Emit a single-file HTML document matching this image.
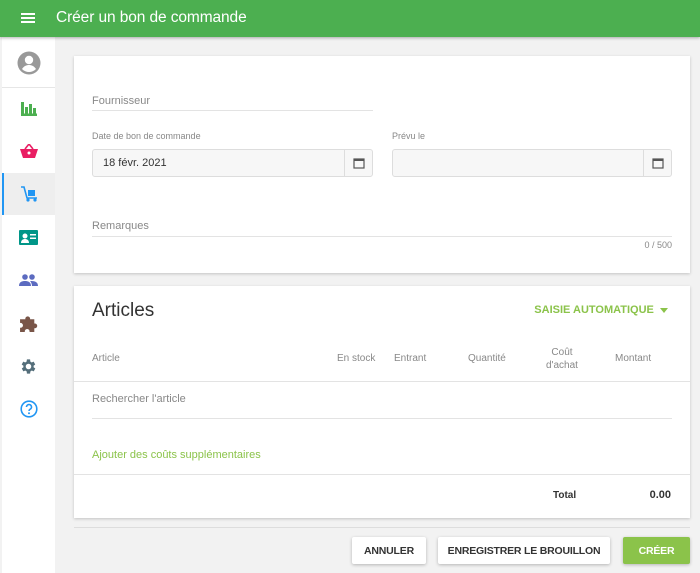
<!DOCTYPE html>
<html><head><meta charset="utf-8"><style>
*{box-sizing:border-box;margin:0;padding:0}
body{width:700px;height:573px;background:#f2f2f2;font-family:"Liberation Sans",sans-serif;position:relative;overflow:hidden;color:#333}
.hdr{position:absolute;left:0;top:0;width:700px;height:37px;background:#4caf50;box-shadow:0 1px 3px rgba(0,0,0,.3);z-index:2}
.hdr .t{position:absolute;left:56px;top:9px;color:#fff;font-size:15.5px;letter-spacing:-0.1px}
.hdr .m{position:absolute;left:21px;top:13px;width:14px;height:2px;background:#fff;box-shadow:0 4px 0 #fff,0 8px 0 #fff}
.side{position:absolute;left:2px;top:37px;width:53px;height:536px;background:#fff}
.ic{position:absolute;left:0;width:53px;height:42px;display:flex;align-items:center;justify-content:center}
.card{position:absolute;left:74px;width:616px;background:#fff;box-shadow:0 1px 3px rgba(0,0,0,.2)}
.lbl{position:absolute;font-size:10px;color:#888}
.line{position:absolute;height:1px;background:#e3e3e3}
.inp{position:absolute;height:28px;border:1px solid #ddd;border-radius:3px;background:#f7f7f7;font-size:11px;color:#333;padding:7px 10px}
.cal{position:absolute;right:0;top:0;width:28px;height:26px;border-left:1px solid #ddd;display:flex;align-items:center;justify-content:center}
.th{position:absolute;font-size:10px;color:#888;text-align:center}
.btn{position:absolute;top:537px;height:27px;background:#fff;box-shadow:0 1px 3px rgba(0,0,0,.25);border-radius:2px;font-size:10.5px;font-weight:bold;color:#333;display:flex;align-items:center;justify-content:center;letter-spacing:-0.2px}
</style></head><body>
<div class="hdr"><div class="m"></div><div class="t">Créer un bon de commande</div></div>
<div class="side">
<div class="ic" style="top:4px;height:44px"><svg width="24" height="24" viewBox="0 0 24 24"><circle cx="12" cy="12" r="11.5" fill="#999"/><circle cx="12" cy="9" r="4.2" fill="#fff"/><path d="M5 18c2-3 4.5-4 7-4s5 1 7 4c-2 2-4.5 3-7 3s-5-1-7-3z" fill="#fff"/></svg></div>
<div style="position:absolute;top:50px;left:0;width:53px;height:1px;background:#e6e6e6"></div>
<div class="ic" style="top:51px"><svg width="16" height="14" viewBox="0 0 16 14"><path d="M0 0h3v14H0zM4 5h3v7H4zM8 2h3v10H8zM12 6h3v6h-3zM0 11.5h16V14H0z" fill="#4caf50"/></svg></div>
<div class="ic" style="top:93px"><svg width="18" height="14" viewBox="0 0 18 14"><path d="M5 5L9 0l4 5" stroke="#e91e63" stroke-width="1.6" fill="none"/><path d="M0 5h18l-3 9H3z" fill="#e91e63"/><circle cx="9" cy="9" r="1.5" fill="#fff"/></svg></div>
<div style="position:absolute;top:136px;left:0;width:53px;height:42px;background:#eee;border-left:2px solid #2196f3"></div>
<div class="ic" style="top:136px"><svg width="18" height="18" viewBox="0 0 18 18"><path d="M1 2h3l3 11h10" stroke="#2196f3" stroke-width="1.6" fill="none"/><rect x="8" y="5" width="7" height="6" fill="#2196f3"/><circle cx="8" cy="15" r="1.6" fill="#2196f3"/><circle cx="15" cy="15" r="1.6" fill="#2196f3"/></svg></div>
<div class="ic" style="top:179px"><svg width="19" height="15" viewBox="0 0 19 15"><rect width="19" height="15" rx="1" fill="#009688"/><circle cx="6" cy="6" r="2.5" fill="#fff"/><path d="M2 13c0-3 2-4 4-4s4 1 4 4z" fill="#fff"/><path d="M11 4h6v1.5h-6zM11 7.5h6V9h-6z" fill="#fff"/></svg></div>
<div class="ic" style="top:222px"><svg width="19" height="12" viewBox="0 0 19 12"><circle cx="6" cy="3" r="2.8" fill="#5c6bc0"/><circle cx="13" cy="3" r="2.8" fill="#5c6bc0"/><path d="M0 12c0-4 3-5 6-5s6 1 6 5zM11 7c3 0 8 0 8 5h-6c0-2-1-4-2-5z" fill="#5c6bc0"/></svg></div>
<div class="ic" style="top:265px"><svg width="19" height="19" viewBox="0 0 18 18"><path d="M1 5h5a2.3 2.3 0 1 1 4.5 0h4v4a2.3 2.3 0 1 1 0 4.5V17H10a2.3 2.3 0 1 0-4.5 0H1v-4a2.3 2.3 0 1 0 0-4.5z" fill="#795548"/></svg></div>
<div class="ic" style="top:308px"><svg width="19" height="19" viewBox="0 0 24 24"><path fill="#546e7a" d="M19.4 13a7.5 7.5 0 0 0 0-2l2.1-1.6-2-3.5-2.5 1a7 7 0 0 0-1.7-1L15 3h-4l-.4 2.9a7 7 0 0 0-1.7 1l-2.5-1-2 3.5L6.6 11a7.5 7.5 0 0 0 0 2l-2.1 1.6 2 3.5 2.5-1a7 7 0 0 0 1.7 1L11 21h4l.4-2.9a7 7 0 0 0 1.7-1l2.5 1 2-3.5zM13 15.5a3.5 3.5 0 1 1 0-7 3.5 3.5 0 0 1 0 7z" transform="translate(-1 0)"/></svg></div>
<div class="ic" style="top:351px"><svg width="18" height="18" viewBox="0 0 18 18"><circle cx="9" cy="9" r="7.8" stroke="#2196f3" stroke-width="1.6" fill="none"/><path d="M6.5 7a2.5 2.5 0 1 1 3.5 2.3c-.7.4-1 .8-1 1.7" stroke="#2196f3" stroke-width="1.6" fill="none"/><circle cx="9" cy="13.3" r="1" fill="#2196f3"/></svg></div>
</div>

<div class="card" style="top:56px;height:217px">
<div class="lbl" style="left:18px;top:39px;font-size:11px">Fournisseur</div>
<div class="line" style="left:18px;top:54px;width:281px"></div>
<div class="lbl" style="left:18px;top:75px;font-size:9px">Date de bon de commande</div>
<div class="inp" style="left:18px;top:93px;width:281px">18 févr. 2021<div class="cal"><svg width="12" height="12" viewBox="0 0 12 12"><rect x="1" y="2" width="10" height="9" fill="none" stroke="#555" stroke-width="1.2"/><rect x="1" y="2" width="10" height="2" fill="#555"/></svg></div></div>
<div class="lbl" style="left:318px;top:75px;font-size:9px">Prévu le</div>
<div class="inp" style="left:318px;top:93px;width:280px"><div class="cal"><svg width="12" height="12" viewBox="0 0 12 12"><rect x="1" y="2" width="10" height="9" fill="none" stroke="#555" stroke-width="1.2"/><rect x="1" y="2" width="10" height="2" fill="#555"/></svg></div></div>
<div class="lbl" style="left:18px;top:164px;font-size:11px">Remarques</div>
<div class="line" style="left:18px;top:180px;width:580px"></div>
<div class="lbl" style="right:18px;top:184px;font-size:9px">0 / 500</div>
</div>

<div class="card" style="top:286px;height:232px">
<div style="position:absolute;left:18px;top:14px;font-size:19px;color:#333">Articles</div>
<div style="position:absolute;right:22px;top:18px;font-size:11px;font-weight:bold;color:#8bc34a">SAISIE AUTOMATIQUE &nbsp;<span style="display:inline-block;width:0;height:0;border-left:4px solid transparent;border-right:4px solid transparent;border-top:5px solid #8bc34a;vertical-align:middle"></span></div>
<div class="th" style="left:18px;top:67px">Article</div>
<div class="th" style="left:263px;top:67px">En stock</div>
<div class="th" style="left:320px;top:67px">Entrant</div>
<div class="th" style="left:394px;top:67px">Quantité</div>
<div class="th" style="left:472px;top:60px;line-height:13px">Coût<br>d'achat</div>
<div class="th" style="left:541px;top:67px">Montant</div>
<div class="line" style="left:0;top:95px;width:616px"></div>
<div class="lbl" style="left:18px;top:107px;font-size:11px">Rechercher l'article</div>
<div class="line" style="left:18px;top:132px;width:580px"></div>
<div style="position:absolute;left:18px;top:163px;font-size:11px;color:#8bc34a">Ajouter des coûts supplémentaires</div>
<div class="line" style="left:0;top:188px;width:616px"></div>
<div style="position:absolute;left:479px;top:204px;font-size:10px;font-weight:bold">Total</div>
<div style="position:absolute;right:19px;top:203px;font-size:11px;font-weight:bold">0.00</div>
</div>
<div class="line" style="left:74px;top:527px;width:616px;background:#ddd"></div>
<div class="btn" style="left:352px;width:74px">ANNULER</div>
<div class="btn" style="left:438px;width:172px">ENREGISTRER LE BROUILLON</div>
<div class="btn" style="left:623px;width:67px;background:#8bc34a;color:#fff">CRÉER</div>
</body></html>
